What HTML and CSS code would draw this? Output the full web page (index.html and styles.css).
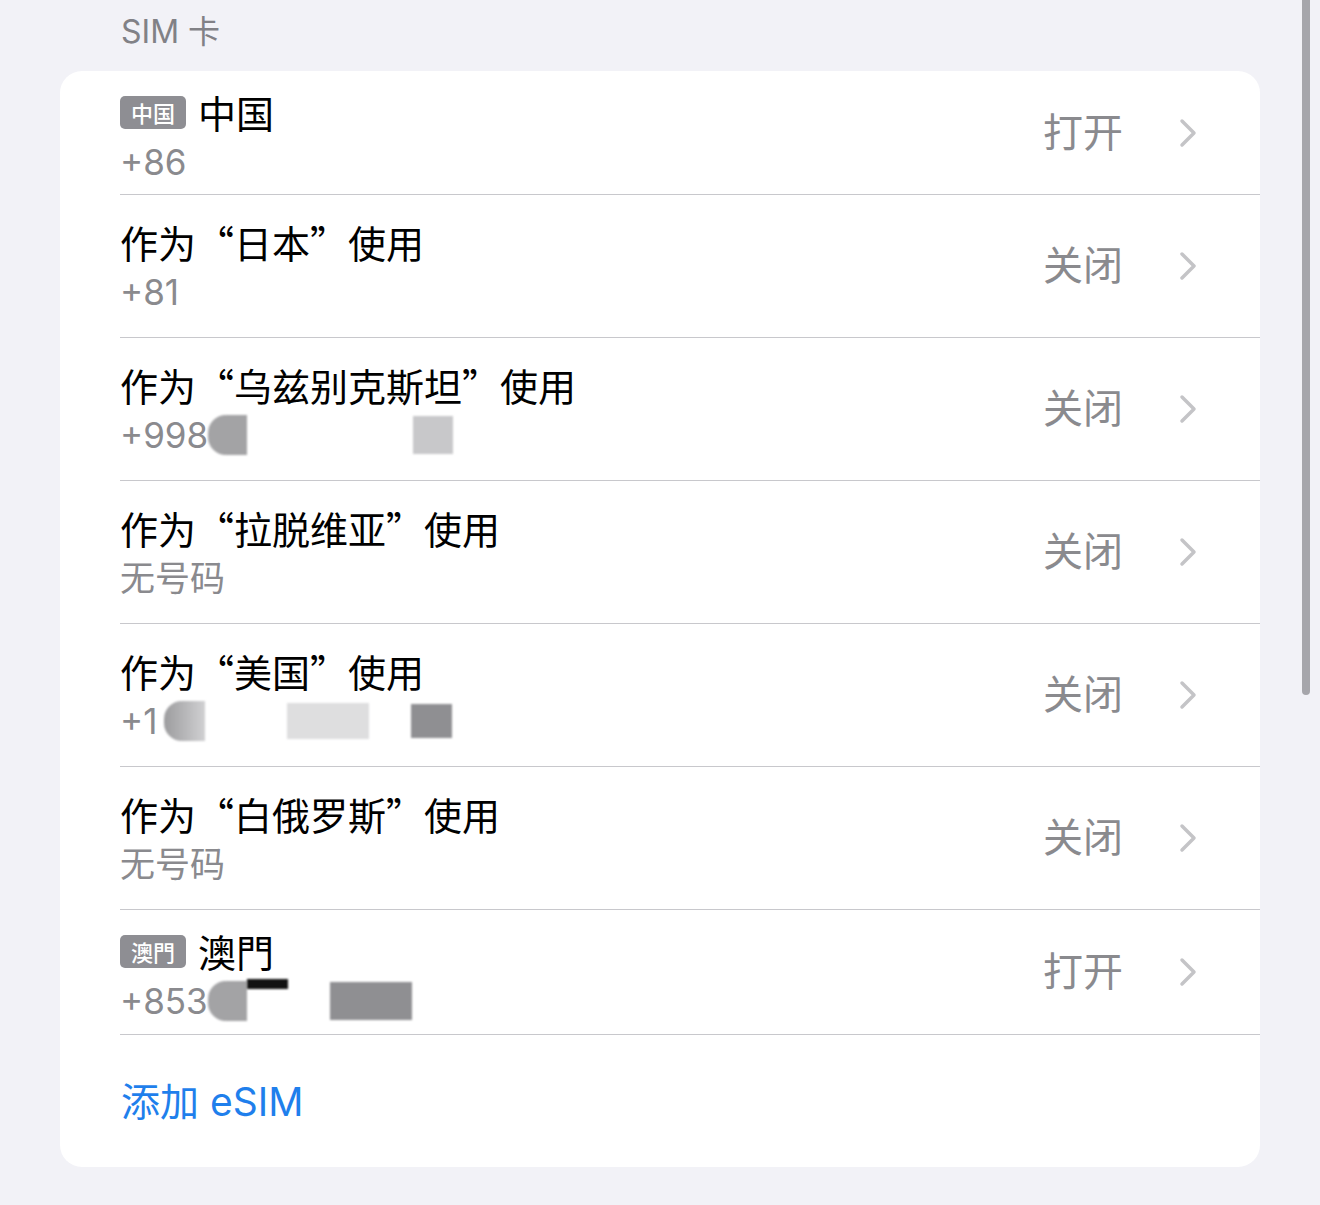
FILE: index.html
```html
<!DOCTYPE html>
<html lang="zh-CN">
<head>
    <meta charset="UTF-8">
    <meta name="viewport" content="width=device-width, initial-scale=1.0">
    <title>SIM 卡</title>
    <link rel="stylesheet" href="styles.css">
</head>
<body>
    <div class="page">
        <div class="section-title">SIM 卡</div>
        <div class="card">
            <div class="row compact">
                <div class="info">
                    <div class="title"><span class="badge">中国</span>中国</div>
                    <div class="sub">+86</div>
                </div>
                <div class="state">打开</div>
                <svg class="chevron" width="18" height="30" viewBox="0 0 18 30"><path d="M3 3 L15 15 L3 27"/></svg>
            </div>
            <div class="row">
                <div class="info">
                    <div class="title">作为“日本”使用</div>
                    <div class="sub">+81</div>
                </div>
                <div class="state">关闭</div>
                <svg class="chevron" width="18" height="30" viewBox="0 0 18 30"><path d="M3 3 L15 15 L3 27"/></svg>
            </div>
            <div class="row">
                <div class="info">
                    <div class="title">作为“乌兹别克斯坦”使用</div>
                    <div class="sub">+998<span class="blot b-round"></span><span class="blot b-light gap-l"></span></div>
                </div>
                <div class="state">关闭</div>
                <svg class="chevron" width="18" height="30" viewBox="0 0 18 30"><path d="M3 3 L15 15 L3 27"/></svg>
            </div>
            <div class="row">
                <div class="info">
                    <div class="title">作为“拉脱维亚”使用</div>
                    <div class="sub">无号码</div>
                </div>
                <div class="state">关闭</div>
                <svg class="chevron" width="18" height="30" viewBox="0 0 18 30"><path d="M3 3 L15 15 L3 27"/></svg>
            </div>
            <div class="row">
                <div class="info">
                    <div class="title">作为“美国”使用</div>
                    <div class="sub">+1<span class="blot b-fade"></span><span class="blot b-pale gap-m"></span><span class="blot b-dark gap-s"></span></div>
                </div>
                <div class="state">关闭</div>
                <svg class="chevron" width="18" height="30" viewBox="0 0 18 30"><path d="M3 3 L15 15 L3 27"/></svg>
            </div>
            <div class="row">
                <div class="info">
                    <div class="title">作为“白俄罗斯”使用</div>
                    <div class="sub">无号码</div>
                </div>
                <div class="state">关闭</div>
                <svg class="chevron" width="18" height="30" viewBox="0 0 18 30"><path d="M3 3 L15 15 L3 27"/></svg>
            </div>
            <div class="row compact last">
                <div class="info">
                    <div class="title"><span class="badge">澳門</span>澳門</div>
                    <div class="sub">+853<span class="blot b-round"></span><span class="blot b-bar"></span><span class="blot b-dark wide gap-s"></span></div>
                </div>
                <div class="state">打开</div>
                <svg class="chevron" width="18" height="30" viewBox="0 0 18 30"><path d="M3 3 L15 15 L3 27"/></svg>
            </div>
            <div class="add-row">添加 eSIM</div>
        </div>
    </div>
    <div class="scrollbar"></div>
</body>
</html>
```

FILE: styles.css
```css
body {
    margin: 0;
    background-color: #f2f2f7;
    font-family: Inter, "Noto Sans CJK SC", sans-serif;
    overflow: hidden;
}
.page {
    padding: 0 60px;
    width: 1200px;
}
.section-title {
    padding: 10px 0 0 61px;
    height: 71px;
    box-sizing: border-box;
    font-size: 32px;
    line-height: 44px;
    color: #818186;
}
.card {
    background: white;
    border-radius: 22px;
    padding-left: 60px;
    overflow: hidden;
}
.row {
    display: flex;
    align-items: center;
    padding: 24px 63px 25px 0;
    border-bottom: 1px solid #c8c8cc;
}
.row.compact {
    padding: 18px 63px 12px 0;
}
.row.compact.last {
    padding-bottom: 13px;
}
.row.compact .state,
.row.compact .chevron {
    margin-top: -6px;
}
.info {
    flex: 1;
}
.title {
    display: flex;
    align-items: center;
    font-family: "Noto Sans CJK SC", sans-serif;
    font-size: 38px;
    line-height: 46px;
    color: #000;
}
.badge {
    display: inline-flex;
    align-items: center;
    justify-content: center;
    width: 66px;
    height: 33px;
    margin-right: 12px;
    border-radius: 5px;
    background: #8e8e93;
    color: white;
    font-size: 22px;
    font-weight: 500;
    line-height: 33px;
}
.sub {
    display: flex;
    align-items: center;
    height: 40px;
    margin-top: 7px;
    font-size: 35px;
    line-height: 40px;
    color: #8a8a8e;
}
.state {
    font-size: 40px;
    line-height: 46px;
    color: #8a8a8e;
    margin-right: 56px;
}
.chevron {
    display: block;
}
.chevron path {
    fill: none;
    stroke: #c4c4c7;
    stroke-width: 3.5;
    stroke-linecap: round;
    stroke-linejoin: round;
}
.add-row {
    padding: 44px 0 42px 1px;
    font-size: 39px;
    line-height: 46px;
    color: #1f7fec;
}
.blot {
    display: inline-block;
    height: 40px;
    filter: blur(1px);
}
.b-round {
    width: 39px;
    background: #a3a3a5;
    border-radius: 18px 0 0 18px;
}
.b-light {
    width: 40px;
    height: 38px;
    background: #c8c8ca;
}
.b-fade {
    width: 41px;
    margin-left: 7px;
    background: linear-gradient(90deg, #9c9c9e, #d0d0d2);
    border-radius: 18px 0 0 18px;
}
.b-pale {
    width: 82px;
    height: 36px;
    background: #dededf;
}
.b-dark {
    width: 41px;
    height: 34px;
    background: #8f8f92;
}
.b-dark.wide {
    width: 82px;
    height: 38px;
}
.b-bar {
    width: 41px;
    height: 10px;
    align-self: flex-start;
    margin-top: -2px;
    background: #111;
}
.gap-l {
    margin-left: 166px;
}
.gap-m {
    margin-left: 82px;
}
.gap-s {
    margin-left: 42px;
}
.scrollbar {
    position: absolute;
    top: 0;
    left: 1302px;
    width: 8px;
    height: 695px;
    border-radius: 0 0 4px 4px;
    background: #a6a6ab;
}
```
